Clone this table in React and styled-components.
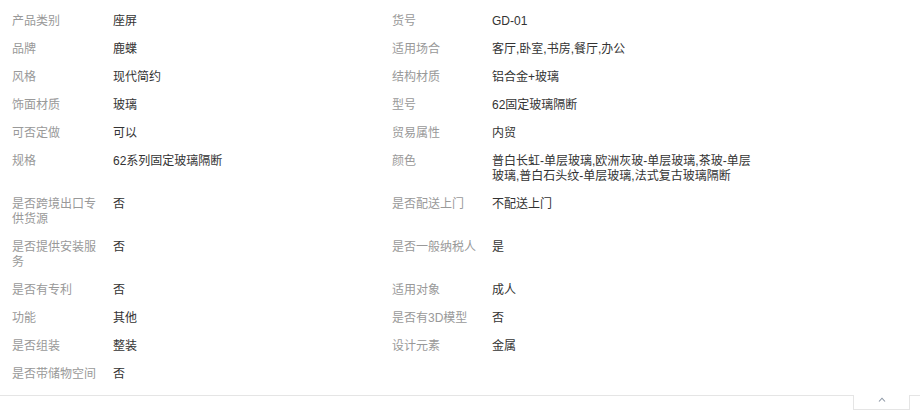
import React from "react";
import styled, { createGlobalStyle } from "styled-components";

const GlobalStyle = createGlobalStyle`
  html, body {
    margin: 0;
    padding: 0;
    background: #ffffff;
  }
  body {
    font-family: "Liberation Sans", "Noto Sans CJK SC", sans-serif;
    font-size: 12px;
    line-height: 15px;
  }
`;

const Page = styled.div`
  width: 920px;
  display: flex;
  flex-direction: column;
`;

const Table = styled.div`
  display: flex;
  flex-direction: column;
  padding: 1px 0 13px 12px;
`;

const Row = styled.div`
  display: grid;
  grid-template-columns: 101px 279px 100px 268px;
  padding-top: 13px;
`;

const Label = styled.div`
  color: #999999;
  padding-right: 10px;
  word-break: break-all;
`;

const Value = styled.div`
  color: #333333;
  padding-right: 2px;
  word-break: break-all;
`;

const Footer = styled.div`
  display: flex;
  align-items: flex-start;
`;

const Rule = styled.div`
  flex: ${(p) => (p.$grow ? 1 : "none")};
  width: ${(p) => (p.$grow ? "auto" : `${p.$w}px`)};
  border-top: 1px solid #e5e5e5;
`;

const Tab = styled.button`
  width: 57px;
  height: 15px;
  box-sizing: border-box;
  border: 1px solid #e5e5e5;
  border-top: none;
  background: #ffffff;
  padding: 2px 0 0;
  margin: 0;
  display: flex;
  justify-content: center;
  align-items: flex-start;
  cursor: pointer;
`;

const rows = [
  ["产品类别", "座屏", "货号", "GD-01"],
  ["品牌", "鹿蝶", "适用场合", "客厅,卧室,书房,餐厅,办公"],
  ["风格", "现代简约", "结构材质", "铝合金+玻璃"],
  ["饰面材质", "玻璃", "型号", "62固定玻璃隔断"],
  ["可否定做", "可以", "贸易属性", "内贸"],
  [
    "规格",
    "62系列固定玻璃隔断",
    "颜色",
    "普白长虹-单层玻璃,欧洲灰玻-单层玻璃,茶玻-单层玻璃,普白石头纹-单层玻璃,法式复古玻璃隔断",
  ],
  ["是否跨境出口专供货源", "否", "是否配送上门", "不配送上门"],
  ["是否提供安装服务", "否", "是否一般纳税人", "是"],
  ["是否有专利", "否", "适用对象", "成人"],
  ["功能", "其他", "是否有3D模型", "否"],
  ["是否组装", "整装", "设计元素", "金属"],
  ["是否带储物空间", "否", "", ""],
];

export default function App() {
  return (
    <Page>
      <GlobalStyle />
      <Table>
        {rows.map((r, i) => (
          <Row key={i}>
            <Label>{r[0]}</Label>
            <Value>{r[1]}</Value>
            <Label>{r[2]}</Label>
            <Value>{r[3]}</Value>
          </Row>
        ))}
      </Table>
      <Footer>
        <Rule $grow />
        <Tab aria-label="收起">
          <svg width="8" height="5" viewBox="0 0 8 5">
            <path d="M1 4.5 L4 1.2 L7 4.5" fill="none" stroke="#8d97a5" strokeWidth="1.1" />
          </svg>
        </Tab>
        <Rule $w={10} />
      </Footer>
    </Page>
  );
}
